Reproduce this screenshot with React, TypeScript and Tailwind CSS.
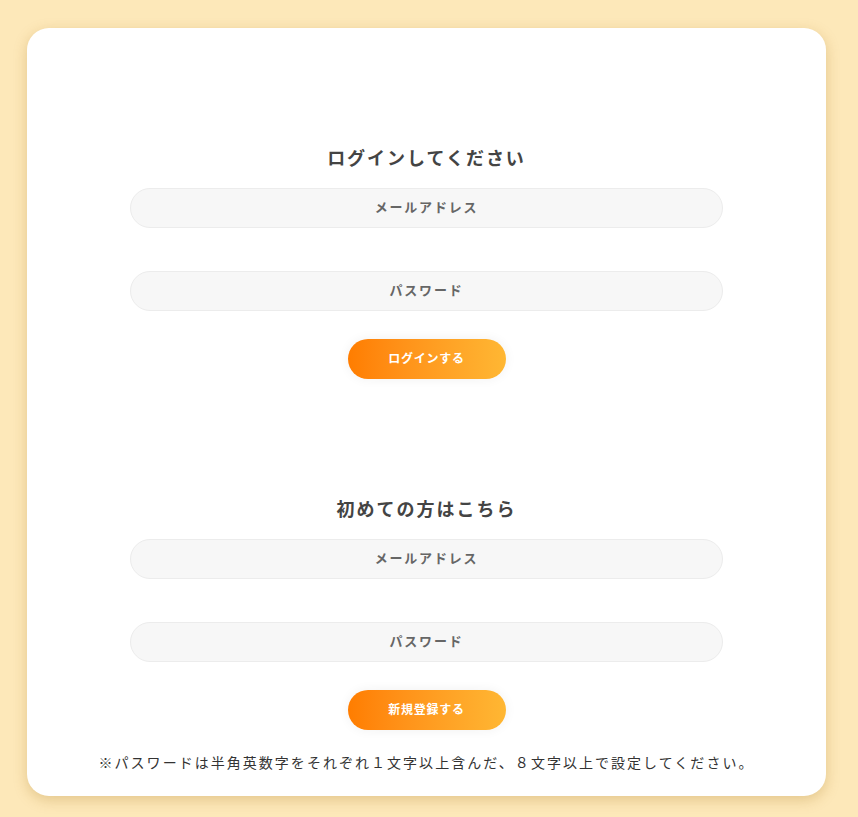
const font = { fontFamily: '"Noto Sans CJK JP", "Noto Sans", sans-serif' };

function Field({ placeholder }: { placeholder: string }) {
  return (
    <input
      type="text"
      placeholder={placeholder}
      className="h-10 w-[593px] rounded-full border border-[#ececec] bg-[#f7f7f7] pb-[3px] text-center text-[13px] font-bold tracking-[0.14em] text-[#555] outline-none placeholder:text-[#666]"
    />
  );
}

function Section({ title, button }: { title: string; button: string }) {
  return (
    <div className="flex flex-col items-center">
      <h2 className="text-[18px] leading-[27px] font-bold tracking-[0.11em] text-[#444]">{title}</h2>
      <div className="mt-[17px] flex flex-col gap-[43px]">
        <Field placeholder="メールアドレス" />
        <Field placeholder="パスワード" />
      </div>
      <button className="mt-7 h-10 w-[158px] rounded-full bg-gradient-to-r from-[#ff7d00] to-[#ffb733] pb-[2px] text-[12px] font-bold tracking-[0.06em] text-white shadow-[0_0_12px_rgba(0,0,0,0.06)]">
        {button}
      </button>
    </div>
  );
}

export default function App() {
  return (
    <div className="min-h-[817px] bg-[#fde8b9] px-[27px] pt-7 pb-[22px]" style={font}>
      <div className="flex w-[799px] flex-col items-center rounded-[22px] bg-white pt-[116px] pb-[23px] shadow-[0_4px_14px_rgba(160,110,20,0.28)]">
        <Section title="ログインしてください" button="ログインする" />
        <div className="mt-[116px]">
          <Section title="初めての方はこちら" button="新規登録する" />
        </div>
        <p className="mt-[22px] text-[14px] leading-[21px] tracking-[0.145em] text-[#333]">
          ※パスワードは半角英数字をそれぞれ１文字以上含んだ、８文字以上で設定してください。
        </p>
      </div>
    </div>
  );
}
